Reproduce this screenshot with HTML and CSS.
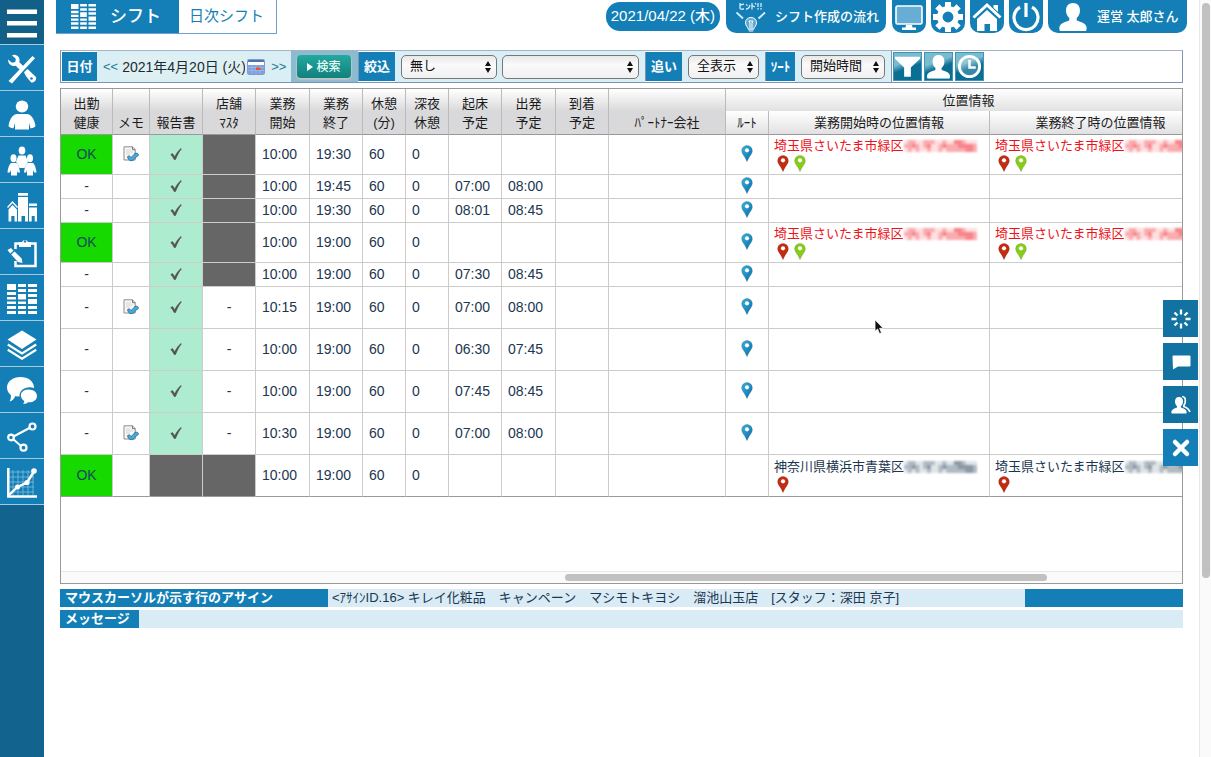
FILE: index.html
```html
<!DOCTYPE html>
<html lang="ja">
<head>
<meta charset="utf-8">
<meta name="viewport" content="width=device-width, initial-scale=1">
<title>日次シフト</title>
<link rel="stylesheet" href="styles.css">
</head>
<body>
<svg class="defs" aria-hidden="true">
  <linearGradient id="g-blue" x1="0" y1="0" x2="1" y2="1"><stop offset="0" stop-color="#38b0dc"/><stop offset="1" stop-color="#0b6ca8"/></linearGradient>
  <symbol id="pin" viewBox="0 0 12 17"><path d="M6 .5C2.900 .5 .6 2.800 .6 5.800c0 2.400 1.300 3.600 3 6.300C4.600 13.700 5.400 15.300 6 16.700c.6-1.400 1.400-3 2.400-4.600 1.700-2.700 3-3.900 3-6.300C11.400 2.800 9.100.5 6 .5z" stroke="#0003" stroke-width=".6"/><circle cx="6" cy="5.300" r="2.100" fill="#fff"/></symbol>
  <symbol id="check" viewBox="0 0 12 12"><path d="M.8 6.600 2.500 5.600 4.700 8.800C6.300 5.600 8.300 2.700 11 .5L11.400.9C8.900 3.900 7.100 7.500 5.500 11.500H4.100C3.300 9.600 2.200 8 .8 6.600z" fill="#555052" stroke="#555052" stroke-width=".6"/></symbol>
  <symbol id="memo" viewBox="0 0 16 16"><path d="M1 .8h8.500L12.200 3.500V14H1z" fill="#f7f7f7" stroke="#8d8d8d"/><path d="M9.500.8v2.900h2.700" fill="#ddd" stroke="#777"/><path d="M3 4h5M3 6h7M3 8h4" stroke="#d5d5d5"/><path d="M4.600 10.500c1.200-1 2.400-.6 3.400.8C9.300 11 10 9.500 11 8.500c.4-1.700 3.800-1.900 4.400-.1.200 1.800-1.500 1.800-2.400 2.700-1.300 1.600-2.300 3.500-4.600 3.600-2.600-.1-3.600-2-3.800-4.200z" fill="#4aa9d9" stroke="#1b628e" stroke-width=".8"/></symbol>
  <symbol id="grid" viewBox="0 0 30 30"><path d="M0 0h9v6H0zM0 8h9v3H0zM0 13h9v2.500H0zM0 17.500h9V20H0zM0 22h9v3H0zM0 27h9v3H0zM11 0h8v3h-8zM11 5h8v3h-8zM11 10h8v5.500h-8zM11 17.500h8V20h-8zM11 22h8v3h-8zM11 27h8v3h-8zM21 0h9v3h-9zM21 5h9v3h-9zM21 10h9v3h-9zM21 15h9v5h-9zM21 22h9v3h-9zM21 27h9v3h-9z"/></symbol>
  <symbol id="person" viewBox="0 0 28 28"><path d="M14 0c4.500 0 7 3 7 7.500 0 3-1.300 6-3.300 7.500v2.500c4.500 1.500 9.300 3 9.800 6.500.3 1.600.2 2.600-.5 4H1c-.7-1.400-.8-2.400-.5-4 .5-3.500 5.300-5 9.800-6.500V15C8.300 13.500 7 10.500 7 7.500 7 3 9.500 0 14 0z"/></symbol>
  <symbol id="updown" viewBox="0 0 6 12"><path d="M3 0 6 5H0zM3 12 0 7h6z"/></symbol>
  <symbol id="mosaic" viewBox="0 0 76 14" preserveAspectRatio="none"><g fill="currentColor"><path opacity=".13" d="M0 1h76v12H0z"/><path opacity=".25" d="M4 1h8v4H4zM0 5h16v4H0zM4 9h4v4H4zM20 1h12v4H20zM24 5h4v8h-4zM36 5h16v4H36zM40 1h4v4h-4zM36 9h4v4h-4zM44 9h8v4h-8zM52 1h8v12h-8zM60 5h16v8H60z"/><path opacity=".25" d="M8 5h4v4H8zM12 9h4v4h-4zM20 5h8v4h-8zM40 5h4v4h-4zM52 1h12v4H52zM56 5h16v4H56zM64 9h8v4h-8z"/></g></symbol>
</svg>

<div class="app">
  <nav class="side" aria-label="メニュー">
    <button class="side-item menu" aria-label="メニュー"><svg viewBox="0 0 30 30"><path d="M0 1.500h30V6H0zM0 13h30v4.500H0zM0 25h30v4.500H0z"/></svg></button>
    <a class="side-item" href="#" aria-label="設定"><svg viewBox="0 0 30 30"><path d="M25.500 2 28 4.300 16.500 16.500 5 29.500 1.500 27z"/><path d="M8.500 1C12 2 13.300 5.200 12.300 8.200L17 12.800l-3.700 3.500-4.600-4.500C5 12.800 1 10.500 1 5.500l4 3.200 3.300-.7.500-3.200L5 1.500c1-.7 2.200-.9 3.500-.5z"/><path d="m17 18.300 3.500-3.200 8 7.500c2 2-.8 6.700-4.200 5.900-2-2.300-5.500-5.700-7.300-10.200z"/><circle cx="24.500" cy="24.500" r="1.300" fill="#137fb6"/></svg></a>
    <a class="side-item" href="#" aria-label="スタッフ"><svg viewBox="0 0 30 30"><ellipse cx="15" cy="6.500" rx="6.200" ry="6"/><path d="M10 14h10c4 0 7.500 5 8.500 12-1 1.500-3 2.500-5 2.200L22 23v6.500H8V23l-1.500 5.200c-2 .3-4-.7-5-2.200 1-7 4.500-12 8.500-12z"/></svg></a>
    <a class="side-item" href="#" aria-label="グループ"><svg viewBox="0 0 30 30"><ellipse cx="15" cy="4.500" rx="3.300" ry="4"/><path d="M11.500 9.500h7l2.500 6-3.500 6.500h-5L9 15.500z"/><ellipse cx="6.500" cy="12.200" rx="3" ry="4"/><ellipse cx="23" cy="12.200" rx="3" ry="4"/><path d="M4 17h5.500c1.500.8 3 5 3.500 9.500h-2.500L10 24v5.500H4V24l-1.200 2.500H.5C1 22 2.500 17.800 4 17zM20.500 17H26c1.500.8 3 5 3.500 9.500h-2.300L26 24v5.500h-6V24l-.8 2.500H17c.5-4.500 2-8.700 3.500-9.500z"/></svg></a>
    <a class="side-item" href="#" aria-label="店舗"><svg viewBox="0 0 30 30"><path d="M11 1h10v2.800H11zM11 5h10v24.500h-3V24h-3.500v5.500H11zM22 11.500h8v2.500h-8zM22 15.500h8v14h-2.300V24h-3v5.500H22zM1.500 17.500 5.500 13l4.500 4.500v12H7.500V24H4.300v5.500H1.500z"/><path d="m.5 15.500 5-5.500 5 5.500" fill="none" stroke="#fff" stroke-width="1.500"/></svg></a>
    <a class="side-item" href="#" aria-label="記録"><svg viewBox="0 0 30 30"><path d="M8.500 11V5.500h20v22.500h-20v-5" fill="none" stroke="#fff" stroke-width="2.500"/><path d="M12 4h3a3.200 3.200 0 0 1 6 0h3v5H12z"/><circle cx="18" cy="3.400" r="1.200" fill="#137fb6"/><path d="M.5 12 4 10l2.500 2.700-3.300 2.700zM4.200 16.500l3.300-3 7.200 7 .8 4.500-4.500-1z"/></svg></a>
    <a class="side-item" href="#" aria-label="シフト表"><svg><use href="#grid"/></svg></a>
    <a class="side-item" href="#" aria-label="レイヤー"><svg viewBox="0 0 30 30"><path d="m15 .5 14.500 9L15 19 .5 9.500z"/><path d="m.8 14.500 14.200 9 14.200-9M.8 19.700l14.200 9 14.200-9" fill="none" stroke="#fff" stroke-width="2.200"/></svg></a>
    <a class="side-item" href="#" aria-label="チャット"><svg viewBox="0 0 30 30"><path d="M13.500 1C21 1 26.500 5 27 11v1c-7-2.500-15 1.500-14.500 8.500L8 20.300C7.500 22.500 5.500 25 2.500 25.500c1.200-2 1.700-4.200 1.300-6.500C1.500 17 0 14.500 0 11.500 0 5.500 6 1 13.500 1z"/><path d="M21.500 13.500c5 0 8.500 2.800 8.500 6.500 0 4-4 6.800-9 6.300-1.300 1.200-3 1.700-5 1.500 1-.8 1.300-1.700 1.200-2.700-5.700-4-4-11.600 4.300-11.600z"/></svg></a>
    <a class="side-item" href="#" aria-label="共有"><svg viewBox="0 0 30 30"><path d="m6.500 14.500 16-8.500M6 17l8 7" fill="none" stroke="#fff" stroke-width="2"/><g fill="none" stroke="#fff" stroke-width="2.200"><circle cx="4" cy="15.500" r="2.800"/><circle cx="25.500" cy="4.500" r="3"/><circle cx="16.500" cy="25.700" r="3"/></g></svg></a>
    <a class="side-item" href="#" aria-label="グラフ"><svg viewBox="0 0 30 30"><path d="M3 4h24M3 9h24M3 14h24M3 19h24M3 24h24M6 2v25M11 2v25M16 2v25M21 2v25M26 2v25" stroke="#7fbfe0" stroke-width=".8"/><path d="M1.300 0v28.500H30" fill="none" stroke="#fff" stroke-width="2.600"/><path d="m2 27 8.500-8 9.500-4.500 7-11" fill="none" stroke="#fff" stroke-width="2.400"/><circle cx="10.500" cy="19" r="2.500"/><circle cx="20" cy="14.500" r="2.600"/><circle cx="27" cy="3" r="2.800"/></svg></a>
  </nav>

  <main class="main">
    <header class="top">
      <a class="tab active" href="#"><svg><use href="#grid"/></svg>シフト</a>
      <a class="tab" href="#">日次シフト</a>
      <div class="top-right">
        <span class="today">2021/04/22 (木)</span>
        <a class="chip hint" href="#"><svg viewBox="0 0 30 30"><g fill="none" stroke="#d9eef9" stroke-width="1.300"><path d="m4 3 4-.8M4 1v5.500q0 1 4 .5M10 2.500l1.500 1M10 7q3 0 4-4M16 1v6.500M16 3.500l3 1.500M19 1l1 1.500M22 1v4M25 1v4"/><path d="m.5 10.500 6.500 6M29 10.500l-6.500 6" stroke-width="1.800"/></g><path d="M21.300 6.200h1.400v1.400h-1.400zM24.300 6.200h1.400v1.400h-1.400z"/><path d="M15 15.500c3.300 0 5.500 2.300 5.500 5.300 0 3-2.200 4-2.700 6.200h-5.600c-.5-2.200-2.700-3.200-2.700-6.200 0-3 2.200-5.300 5.500-5.300z" fill="#5fa8d0" stroke="#fff"/><path d="M14 26v-5l-1-2h4l-1 2v5M12.300 28h5.400M13 30h4" fill="none" stroke="#fff"/></svg>シフト作成の流れ</a>
        <button class="chip square" aria-label="画面"><svg viewBox="0 0 30 30"><rect x="2" y="4" width="26" height="18" rx="1.500" fill="#67add4" stroke="#fff" stroke-width="1.600"/><path d="M12 23h6l.5 2.500H22V28H8v-2.500h3.500z"/></svg></button>
        <button class="chip square" aria-label="歯車"><svg viewBox="0 0 30 30"><g fill="none" stroke="#fff"><circle cx="15" cy="15" r="8.200" stroke-width="5.500"/><path stroke-width="6" d="M15 0v5M15 25v5M0 15h5M25 15h5M4.400 4.400 8 8M22 22l3.600 3.600M4.400 25.600 8 22M22 8l3.600-3.600"/></g></svg></button>
        <button class="chip square" aria-label="ホーム"><svg viewBox="0 0 30 30"><path d="M21.500 3H26v7l-4.500-4zM5 17l10-9 10 9v12h-7v-7h-5.500v7H5z"/><path d="M1.500 16 15 3.500 28.500 16" fill="none" stroke="#137fb6" stroke-width="5"/><path d="M1.500 15.500 15 3l13.500 12.500" fill="none" stroke="#fff" stroke-width="3"/></svg></button>
        <button class="chip square" aria-label="電源"><svg viewBox="0 0 30 30"><path d="M9 5.200a12 12 0 1 0 12 0M15 1v14" fill="none" stroke="#fff" stroke-width="3.200"/></svg></button>
        <a class="chip user" href="#"><svg><use href="#person"/></svg>運営 太郎さん</a>
      </div>
    </header>

    <div class="content">
      <form class="bar">
        <label class="lab" for="day">日付</label>
        <div class="zone date"><a href="#">&lt;&lt;</a><input id="day" type="text" value="2021年4月20日 (火)"><button type="button" class="cal" aria-label="カレンダー"><svg viewBox="0 0 18 16"><rect x=".5" y=".5" width="17" height="15" rx="1" fill="#fff" stroke="#8997c9"/><path d="M1 1h16v2H1z" fill="#4b74b4"/><path d="M1 6h16v9H1z" fill="#7fa0de"/><path d="M1 8.500h16M1 11.500h16M5 6v9M9 6v9M13 6v9" stroke="#a5bbe9" stroke-width=".7"/><path d="M9 8.500h4.500V11H9z" fill="#e8502f"/></svg></button><a href="#">&gt;&gt;</a></div>
        <div class="zone search"><button type="button" class="go"><svg viewBox="0 0 6 8"><path d="M0 0 6 4 0 8z"/></svg>検索</button></div>
        <label class="lab split" for="filter">絞込</label>
        <div class="zone"><span class="pick w-filter"><select id="filter"><option>無し</option></select><svg><use href="#updown"/></svg></span><span class="pick w-value"><select aria-label="絞込の値"><option></option></select><svg><use href="#updown"/></svg></span></div>
        <label class="lab split" for="follow">追い</label>
        <div class="zone"><span class="pick w-follow"><select id="follow"><option>全表示</option></select><svg><use href="#updown"/></svg></span></div>
        <label class="lab split narrow" for="sort">ｿｰﾄ</label>
        <div class="zone"><span class="pick w-sort"><select id="sort"><option>開始時間</option></select><svg><use href="#updown"/></svg></span></div>
        <div class="tools">
          <button type="button" aria-label="フィルター"><svg viewBox="0 0 28 28"><path d="M1 4h26v2L17.500 15v9.500h-7V15L1 6z"/></svg></button>
          <button type="button" aria-label="人"><svg viewBox="-2 -2 32 31"><use href="#person" width="28" height="28"/></svg></button>
          <button type="button" aria-label="時計"><svg viewBox="0 0 28 28"><circle cx="14" cy="14" r="10.500" fill="#ffffff30" stroke="#fff" stroke-width="3"/><path d="M14 7v8h6.500" fill="none" stroke="#fff" stroke-width="2.600"/></svg></button>
        </div>
      </form>

      <div class="panel">
        <table class="shift">
          <colgroup><col class="c52"><col class="c37"><col class="c53"><col class="c53"><col class="c54"><col class="c53"><col class="c43"><col class="c43"><col class="c53"><col class="c54"><col class="c53"><col class="c117"><col class="c43"><col class="c221"><col class="c222"></colgroup>
          <thead>
            <tr><th rowspan="2">出勤<br>健康</th><th rowspan="2">メモ</th><th rowspan="2">報告書</th><th rowspan="2">店舗<br>ﾏｽﾀ</th><th rowspan="2">業務<br>開始</th><th rowspan="2">業務<br>終了</th><th rowspan="2">休憩<br>(分)</th><th rowspan="2">深夜<br>休憩</th><th rowspan="2">起床<br>予定</th><th rowspan="2">出発<br>予定</th><th rowspan="2">到着<br>予定</th><th rowspan="2">ﾊﾟｰﾄﾅｰ会社</th><th colspan="3" class="group">位置情報</th></tr>
            <tr class="sub"><th>ﾙｰﾄ</th><th>業務開始時の位置情報</th><th>業務終了時の位置情報</th></tr>
          </thead>
          <tbody>
            <tr class="mid"><td class="ok">OK</td><td class="c"><svg class="memo"><use href="#memo"/></svg></td><td class="done"><svg><use href="#check"/></svg></td><td class="off"></td><td>10:00</td><td>19:30</td><td>60</td><td>0</td><td></td><td></td><td></td><td></td><td class="c"><svg class="pin blue"><use href="#pin"/></svg></td><td class="loc red"><div>埼玉県さいたま市緑区<svg class="mosaic"><use href="#mosaic"/></svg></div><div><svg class="pin crimson"><use href="#pin"/></svg><svg class="pin lime"><use href="#pin"/></svg></div></td><td class="loc red"><div>埼玉県さいたま市緑区<svg class="mosaic"><use href="#mosaic"/></svg></div><div><svg class="pin crimson"><use href="#pin"/></svg><svg class="pin lime"><use href="#pin"/></svg></div></td></tr>
            <tr class="low"><td class="c">-</td><td></td><td class="done"><svg><use href="#check"/></svg></td><td class="off"></td><td>10:00</td><td>19:45</td><td>60</td><td>0</td><td>07:00</td><td>08:00</td><td></td><td></td><td class="c"><svg class="pin blue"><use href="#pin"/></svg></td><td></td><td></td></tr>
            <tr class="low"><td class="c">-</td><td></td><td class="done"><svg><use href="#check"/></svg></td><td class="off"></td><td>10:00</td><td>19:30</td><td>60</td><td>0</td><td>08:01</td><td>08:45</td><td></td><td></td><td class="c"><svg class="pin blue"><use href="#pin"/></svg></td><td></td><td></td></tr>
            <tr class="mid"><td class="ok">OK</td><td></td><td class="done"><svg><use href="#check"/></svg></td><td class="off"></td><td>10:00</td><td>19:00</td><td>60</td><td>0</td><td></td><td></td><td></td><td></td><td class="c"><svg class="pin blue"><use href="#pin"/></svg></td><td class="loc red"><div>埼玉県さいたま市緑区<svg class="mosaic"><use href="#mosaic"/></svg></div><div><svg class="pin crimson"><use href="#pin"/></svg><svg class="pin lime"><use href="#pin"/></svg></div></td><td class="loc red"><div>埼玉県さいたま市緑区<svg class="mosaic"><use href="#mosaic"/></svg></div><div><svg class="pin crimson"><use href="#pin"/></svg><svg class="pin lime"><use href="#pin"/></svg></div></td></tr>
            <tr class="low"><td class="c">-</td><td></td><td class="done"><svg><use href="#check"/></svg></td><td class="off"></td><td>10:00</td><td>19:00</td><td>60</td><td>0</td><td>07:30</td><td>08:45</td><td></td><td></td><td class="c"><svg class="pin blue"><use href="#pin"/></svg></td><td></td><td></td></tr>
            <tr><td class="c">-</td><td class="c"><svg class="memo"><use href="#memo"/></svg></td><td class="done"><svg><use href="#check"/></svg></td><td class="c">-</td><td>10:15</td><td>19:00</td><td>60</td><td>0</td><td>07:00</td><td>08:00</td><td></td><td></td><td class="c"><svg class="pin blue"><use href="#pin"/></svg></td><td></td><td></td></tr>
            <tr><td class="c">-</td><td></td><td class="done"><svg><use href="#check"/></svg></td><td class="c">-</td><td>10:00</td><td>19:00</td><td>60</td><td>0</td><td>06:30</td><td>07:45</td><td></td><td></td><td class="c"><svg class="pin blue"><use href="#pin"/></svg></td><td></td><td></td></tr>
            <tr><td class="c">-</td><td></td><td class="done"><svg><use href="#check"/></svg></td><td class="c">-</td><td>10:00</td><td>19:00</td><td>60</td><td>0</td><td>07:45</td><td>08:45</td><td></td><td></td><td class="c"><svg class="pin blue"><use href="#pin"/></svg></td><td></td><td></td></tr>
            <tr><td class="c">-</td><td class="c"><svg class="memo"><use href="#memo"/></svg></td><td class="done"><svg><use href="#check"/></svg></td><td class="c">-</td><td>10:30</td><td>19:00</td><td>60</td><td>0</td><td>07:00</td><td>08:00</td><td></td><td></td><td class="c"><svg class="pin blue"><use href="#pin"/></svg></td><td></td><td></td></tr>
            <tr><td class="ok">OK</td><td></td><td class="off"></td><td class="off"></td><td>10:00</td><td>19:00</td><td>60</td><td>0</td><td></td><td></td><td></td><td></td><td></td><td class="loc"><div>神奈川県横浜市青葉区<svg class="mosaic"><use href="#mosaic"/></svg></div><div><svg class="pin crimson"><use href="#pin"/></svg></div></td><td class="loc"><div>埼玉県さいたま市緑区<svg class="mosaic"><use href="#mosaic"/></svg></div><div><svg class="pin crimson"><use href="#pin"/></svg></div></td></tr>
          </tbody>
        </table>
        <div class="hscroll"><span></span></div>
      </div>

      <div class="info">
        <strong class="wide">マウスカーソルが示す行のアサイン</strong>
        <p>&lt;ｱｻｲﾝID.16&gt; キレイ化粧品　キャンペーン　マシモトキヨシ　溜池山玉店　[スタッフ：深田 京子]</p>
        <span class="cap"></span>
      </div>
      <div class="info">
        <strong>メッセージ</strong>
        <p></p>
      </div>
    </div>
  </main>
  <div class="vscroll"><span></span></div>
</div>

<div class="float">
  <button aria-label="更新"><svg viewBox="0 0 20 20"><path d="M10 .5v5M10 14.500v5M.5 10h5M14.500 10h5M3.500 3.500l3 3M13.500 13.500l3 3M3.500 16.500l3-3M13.500 6.500l3-3" fill="none" stroke="#fff" stroke-width="2.300"/></svg></button>
  <button aria-label="メッセージ"><svg viewBox="0 0 20 20"><path d="M2.500 3.500h16a1 1 0 0 1 1 1v9a1 1 0 0 1-1 1H7L2 17.500 1.500 4.500a1 1 0 0 1 1-1z"/></svg></button>
  <button aria-label="スタッフ"><svg viewBox="0 0 20 20"><path d="M8 2c2.800 0 4 2 4 4.600 0 2-.8 3.800-2 4.700v1.200c3 1 5.300 2 5.600 4.300.1.700 0 1.200-.3 1.700H.7c-.3-.5-.4-1-.3-1.700.3-2.300 2.600-3.300 5.600-4.300v-1.200C4.800 10.400 4 8.600 4 6.600 4 4 5.200 2 8 2z"/><path d="M11 1.500c2.500 0 3.500 2 3.300 4.500 0 2-.7 3.500-1.500 4.500v1c3 1.500 5.500 2.500 6 5.500" fill="none" stroke="#fff" stroke-width="1.700"/></svg></button>
  <button class="close" aria-label="閉じる"><svg viewBox="0 0 20 20"><path d="m4 4 12 12M16 4 4 16" fill="none" stroke="#fff" stroke-width="4.500" stroke-linecap="round"/></svg></button>
</div>
<svg class="pointer" viewBox="0 0 10 16" aria-hidden="true"><path d="M1 .8v11.500l2.600-2.300 1.900 4.600 2-.8-1.900-4.500h3.600z" fill="#111" stroke="#fff" stroke-width=".8"/></svg>
</body>
</html>
```
FILE: styles.css
```css
* { box-sizing: border-box; }
body {
  margin: 0;
  background: #fff;
  color: #1b3650;
  font: 13px/18px "Liberation Sans", "Noto Sans CJK JP", sans-serif;
  overflow: hidden;
}
a { color: inherit; text-decoration: none; }
button { padding: 0; border: 0; font: inherit; color: inherit; cursor: pointer; }
svg { display: block; fill: #fff; }
.defs { position: absolute; width: 0; height: 0; }
.app { display: flex; min-height: 100vh; }

/* left menu */
.side { flex: none; width: 44px; background: #12638d; }
.side-item {
  display: flex; align-items: center; justify-content: center;
  width: 100%; height: 46px; padding-top: 2px;
  background: #137fb6; border-bottom: 1px solid #a5cade;
}
.side-item.menu { height: 45px; background: #125f88; }
.side-item svg { width: 30px; height: 30px; }

/* header */
.main { flex: 1; min-width: 0; }
.top { display: flex; height: 34px; margin: 0 12px; }
.tab {
  display: flex; align-items: center; height: 34px; padding: 0 12px 2px 10px;
  border: 1px solid #6da0cf; border-top: 0; border-left: 0;
  color: #137fb6; font-size: 15px;
}
.tab.active { gap: 14px; padding: 0 18px 0 15px; border-right: 0; background: #137fb6; color: #fff; font-size: 17px; font-weight: 500; }
.tab svg { width: 25px; height: 25px; }
.top-right { display: flex; gap: 5px; margin-left: auto; color: #fff; font-weight: 500; }
.today { height: 29px; margin: 2px 1px 0 0; padding: 0 5px; border-radius: 14px; background: #137fb6; font-size: 15px; line-height: 28px; }
.chip { display: flex; align-items: center; height: 33px; border-radius: 0 0 10px 10px; background: #137fb6; }
.hint { gap: 9px; width: 160px; padding-left: 10px; margin-right: 1px; }
.hint svg { width: 30px; height: 30px; flex: none; }
.square { width: 34px; justify-content: center; }
.square svg { width: 30px; height: 30px; }
.user { gap: 10px; width: 139px; padding-left: 11px; white-space: nowrap; }
.user svg { width: 28px; height: 28px; flex: none; }

/* search bar */
.content { padding: 0 16px; }
.bar {
  display: flex; align-items: stretch; height: 33px; margin: 16px 0 5px; padding-left: 1px;
  border: 1px solid #7d93b4; border-top-color: #a4b4c8;
}
.lab {
  display: flex; align-items: center; justify-content: center; width: 35px; margin: 1px 0;
  background: #137fb6; color: #fff; font-weight: 700;
}
.lab.split { width: 37px; border-left: 1px solid #7d93b4; }
.lab.narrow { width: 30px; }
.zone { display: flex; align-items: center; gap: 5px; padding: 0 6px; background: #daeef5; }
.zone.date { flex: none; gap: 0; width: 194px; color: #237c86; font-size: 13px; }
.date input {
  width: 127px; height: 24px; padding: 0 2px 2px; margin-left: 2px;
  border: 0; background: #dff0f3; color: #1c2a33;
  font: 14px "Liberation Sans", "Noto Sans CJK JP", sans-serif;
}
.cal { margin-right: 6px; background: none; }
.cal svg { width: 18px; height: 16px; }
.zone.search { flex: none; width: 67px; padding: 0 6px; background: #8cbbd0; }
.go {
  display: flex; align-items: center; justify-content: center; gap: 3px; width: 54px; height: 23px; flex: none;
  border-radius: 4px; background: linear-gradient(#22a99e, #12807e); color: #e9fbf6; box-shadow: 0 1px 1px 1px #b9c5c7;
  font-weight: 500; font-size: 12px;
}
.go svg { width: 6px; height: 8px; }
.pick { position: relative; height: 24px; }
.pick select {
  width: 100%; height: 24px; padding: 0 8px 1px; appearance: none;
  border: 1px solid #777; border-radius: 5px; background: linear-gradient(#e8e8e8, #fafafa 40%, #f0f0f0); color: #111;
  font: 13px/20px "Liberation Sans", "Noto Sans CJK JP", sans-serif;
}
.pick svg { position: absolute; right: 6px; top: 6px; width: 6px; height: 12px; fill: #111; pointer-events: none; }
.w-filter { width: 96px; }
.w-value { width: 137px; }
.w-follow { width: 71px; }
.w-sort { width: 84px; }
.tools { display: flex; align-items: center; gap: 2px; padding-left: 1px; border-left: 1px solid #7d93b4; }
.tools button { width: 29px; height: 29px; border: 1px solid #3f93b3; background: linear-gradient(160deg, #79bcd0 35%, #0a6d94 55%, #087095); }
.tools svg { width: 27px; height: 27px; }

/* shift table */
.panel { display: flex; flex-direction: column; min-height: 496px; border: 1px solid #999; overflow: hidden; }
.shift { flex: none; width: 1151px; table-layout: fixed; border-collapse: separate; border-spacing: 0; }
.c37 { width: 37px; } .c43 { width: 43px; } .c52 { width: 52px; } .c53 { width: 53px; } .c54 { width: 54px; }
.c117 { width: 117px; } .c221 { width: 221px; } .c222 { width: 222px; }
.shift th {
  padding: 0 0 2px; vertical-align: bottom; line-height: 19px; font-weight: 400; color: #1a1a1a;
  border-right: 1px solid #bbb; border-bottom: 1px solid #999;
  background: linear-gradient(#fff, #d9d9db 50%);
}
.shift thead tr { height: 22px; }
.shift thead .sub { height: 24px; }
.shift .group { padding: 0 0 1px; border-bottom: 0; background: linear-gradient(#fff, #e1e1e3); }
.shift .sub th { background: linear-gradient(#fff, #e1e1e3); }
.shift tbody tr { height: 42px; }
.shift tbody .mid { height: 40px; }
.shift tbody .low { height: 24px; }
.shift td { padding: 0 6px 2px; font-size: 14px; border-right: 1px solid #ccc; border-bottom: 1px solid #ccc; white-space: nowrap; overflow: hidden; }
.shift tr:last-child td { border-bottom-color: #999; }
.shift .c, .shift .ok, .shift .done { padding: 0 0 2px; text-align: center; }
.shift .ok { background: #16d900; color: #164a5c; }
.shift .done { background: #aeecd0; }
.shift .off { background: #666; }
.shift td svg { margin: 0 auto; }
.done svg { width: 12px; height: 12px; }
.shift .memo { width: 16px; height: 16px; }
.shift .pin { width: 12px; height: 17px; }
.blue { fill: url(#g-blue); }
.crimson { fill: #c42c12; }
.lime { fill: #86cc18; }
.shift .loc { padding: 0 5px; font-size: 13px; }
.loc div { display: flex; align-items: center; height: 18px; }
.shift .loc .pin { margin: 0 2px 0 3px; }
.shift .loc .mosaic { flex: none; width: 73px; height: 14px; margin: 0; filter: blur(1px); }
.shift .red { color: #ee1118; }
.hscroll { height: 12px; margin-top: auto; border-top: 1px solid #e8e8e8; background: #fafafa; }
.hscroll span { display: block; width: 43%; height: 7px; margin: 2px 0 0 45%; border-radius: 4px; background: #c1c1c1; }

/* footer lines */
.info { display: flex; height: 18px; margin-top: 5px; background: #d9ebf4; }
.info + .info { margin-top: 3px; }
.info strong { padding: 0 9px 0 5px; background: #137fb6; color: #fff; line-height: 17px; }
.info .wide { width: 268px; flex: none; }
.info p { flex: 1; margin: 0; padding-left: 4px; white-space: nowrap; line-height: 18px; }
.info .cap { flex: none; width: 158px; background: #137fb6; }

/* page scrollbar */
.vscroll { flex: none; width: 12px; padding: 3px 2px; border-left: 1px solid #e8e8e8; background: #fafafa; }
.vscroll span { display: block; width: 8px; height: 76vh; border-radius: 4px; background: #c1c1c1; }

/* floating actions */
.float { position: fixed; right: 13px; top: 300px; display: grid; gap: 6px; }
.float button { display: flex; align-items: center; justify-content: center; width: 35px; height: 37px; background: #1272a2; }
.float .close { background: #137fb6; }
.float svg { width: 20px; height: 20px; }
.pointer { position: absolute; left: 874px; top: 319px; width: 10px; height: 16px; }
```
